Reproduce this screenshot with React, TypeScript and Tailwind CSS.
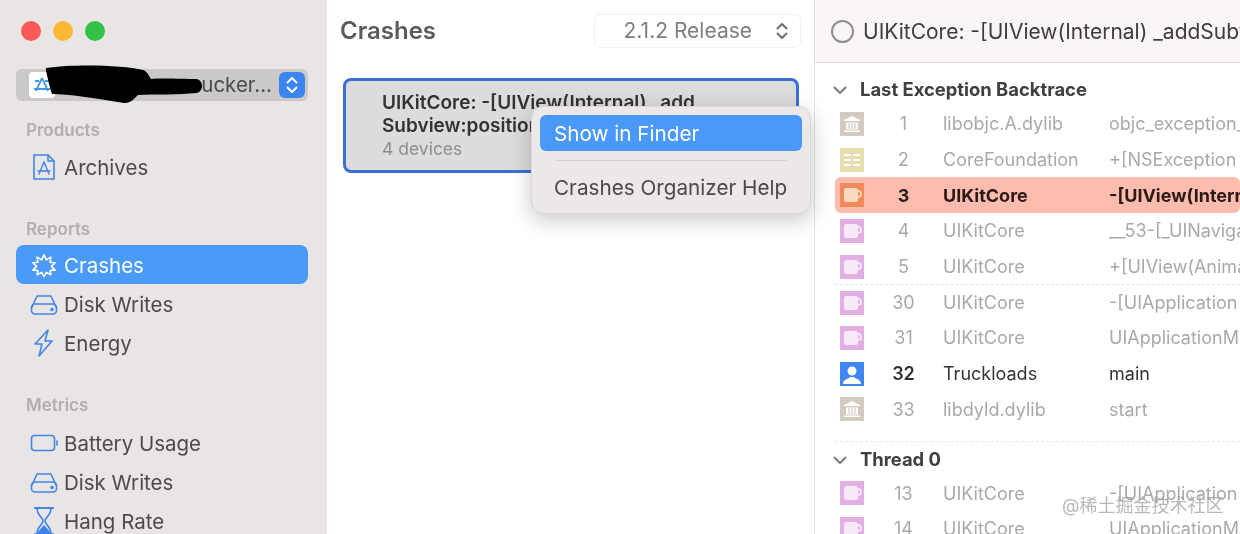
import React from "react";

const blue = "#3f86e8";

function Ic({ children }: { children: React.ReactNode }) {
  return (
    <svg width="28" height="28" viewBox="0 0 28 28" fill="none" stroke={blue} strokeWidth="1.6" strokeLinejoin="round" strokeLinecap="round" className="shrink-0">
      {children}
    </svg>
  );
}
const ArchiveIc = () => (
  <Ic>
    <path d="M4 2h14l6 6v18H4z" />
    <path d="M18 2v6h6" />
    <path d="M14 9l-5 12M14 9l5 12M8 18h12" strokeWidth="1.4" />
  </Ic>
);
const DiskIc = () => (
  <Ic>
    <path d="M2 17l5-11h14l5 11" />
    <rect x="1.5" y="14" width="25" height="10" rx="3.5" />
    <circle cx="22" cy="19.500" r="1" fill={blue} />
  </Ic>
);
const EnergyIc = () => (
  <Ic>
    <path d="M18 1L5 15h7L9 27l13-15h-7z" />
  </Ic>
);
const BatteryIc = () => (
  <Ic>
    <rect x="1.5" y="6.5" width="23" height="15" rx="3" />
    <path d="M27 12v4" />
  </Ic>
);
const HourIc = () => (
  <Ic>
    <path d="M5 1h18M5 27h18" strokeWidth="2.2" />
    <path d="M7 1c0 8 6 9 6 13s-6 5-6 13M21 1c0 8-6 9-6 13s6 5 6 13" />
    <path d="M8 26l6-7 6 7z" fill={blue} />
  </Ic>
);
const BurstIc = () => (
  <svg width="26" height="26" viewBox="0 0 28 28" fill="none" stroke="#fff" strokeWidth="1.7" strokeLinejoin="round" className="shrink-0 mx-px">
    <path d="M14 3l2.500 5.500 5-3-1 5.500 5.500.5-4 4 4 4-5.500.5 1 4.500-5-2.500-2.500 4.500-2.500-4.500-5 2.500 1-4.500-5.500-.5 4-4-4-4 5.500-.5-1-5.500 5 3z" />
  </svg>
);

function Label({ children, className = "" }: { children: React.ReactNode; className?: string }) {
  return <div className={`shrink-0 pl-[10px] text-[17px] leading-[22px] font-semibold text-[#b2aeae] ${className}`}>{children}</div>;
}
function Item({ icon, text, active }: { icon: React.ReactNode; text: string; active?: boolean }) {
  return (
    <div className={`flex items-center gap-[6px] h-[39px] shrink-0 pl-[14px] rounded-lg text-[20.500px] ${active ? "bg-[#4a9af8] text-white" : "text-[#4c4a4a]"}`}>
      {icon}
      <span className="pt-[3px]">{text}</span>
    </div>
  );
}

function Cup({ fill, bg }: { fill: string; bg: string }) {
  return (
    <svg width="24" height="24" viewBox="0 0 24 24" className="shrink-0">
      <rect width="24" height="24" fill={bg} />
      <rect x="4" y="5" width="14" height="14" rx="2.500" fill={fill} />
      <circle cx="18" cy="11" r="3" fill="none" stroke={fill} strokeWidth="1.800" />
    </svg>
  );
}
const Bank = () => (
  <svg width="24" height="24" viewBox="0 0 24 24" className="shrink-0">
    <rect width="24" height="24" fill="#d3cbc0" />
    <path d="M12 4l8 4v1H4V8z" fill="#fff" />
    <path d="M6 10.500h12v7H6z" fill="#fff" />
    <path d="M9 11v6M12 11v6M15 11v6" stroke="#d3cbc0" strokeWidth="1.200" />
    <path d="M4 18.500h16v1.500H4z" fill="#fff" />
  </svg>
);
const Grid = () => (
  <svg width="24" height="24" viewBox="0 0 24 24" className="shrink-0">
    <rect width="24" height="24" fill="#e6dcae" />
    <path d="M4 7h7M13 7h7M4 12h7M13 12h7M4 17h7M13 17h7" stroke="#fff" strokeWidth="2" />
  </svg>
);
const User = () => (
  <svg width="24" height="24" viewBox="0 0 24 24" className="shrink-0">
    <rect width="24" height="24" fill="#3f86f2" />
    <circle cx="12" cy="9" r="4.500" fill="#fff" />
    <path d="M3 22c0-5 6-5 7-7h4c1 2 7 2 7 7z" fill="#fff" />
  </svg>
);

const pink = <Cup fill="#f7eaf7" bg="#e3aee3" />;

function Row({ icon, n, lib, fn, strong, hl, dash }: { icon: React.ReactNode; n: string; lib: string; fn: string; strong?: boolean; hl?: boolean; dash?: boolean }) {
  const color = hl ? "text-[#2a1a18] font-bold" : strong ? "text-[#333]" : "text-[#aaa8a8]";
  return (
    <div
      className={`flex items-center h-[35.700px] ml-[20px] pl-[5px] text-[18px] whitespace-nowrap ${color} ${hl ? "bg-[#fdbcae] rounded-md" : ""} ${dash ? "border-t border-dashed border-[#e4e4e4]" : ""}`}
    >
      {icon}
      <span className={`w-[79px] shrink-0 text-center ${strong ? "font-semibold" : ""}`}>{n}</span>
      <span className="w-[166px] shrink-0">{lib}</span>
      <span className="shrink-0">{fn}</span>
    </div>
  );
}

function Section({ title, className = "" }: { title: string; className?: string }) {
  return (
    <div className={`flex items-center pl-[18px] gap-[13px] ${className}`}>
      <svg width="14" height="9" viewBox="0 0 14 9" fill="none" stroke="#777" strokeWidth="1.800" strokeLinecap="round" strokeLinejoin="round">
        <path d="M1.500 1.500L7 7l5.500-5.500" />
      </svg>
      <span className="text-[18.400px] font-bold text-[#3f3f3f]">{title}</span>
    </div>
  );
}

export default function App() {
  return (
    <div
      className="relative w-[1240px] h-[534px] overflow-hidden flex bg-white blur-[0.6px]"
      style={{ fontFamily: "Inter, 'Noto Sans CJK SC', sans-serif" }}
    >
      {/* Sidebar */}
      <aside className="w-[327px] shrink-0 bg-[#e9e5e5] pl-[16px] pr-[19px] flex flex-col">
        <div className="flex shrink-0 gap-[12px] pt-[21px] pl-[5px] h-[69px]">
          <span className="w-[20px] h-[20px] rounded-full bg-[#fa5a57]" />
          <span className="w-[20px] h-[20px] rounded-full bg-[#fdb833]" />
          <span className="w-[20px] h-[20px] rounded-full bg-[#35c048]" />
        </div>
        <div className="relative shrink-0 h-[32px] rounded-md bg-[#cbc8c8] flex items-center justify-between pl-[13px] pr-[3px] text-[20.500px] text-[#4c4a4a]">
          <span className="w-[26px] h-[26px] bg-white rounded-sm flex items-center justify-center">
            <svg width="20" height="20" viewBox="0 0 20 20" fill="none" stroke="#3f9be8" strokeWidth="1.800">
              <path d="M10 3l-6 13M10 3l6 13M2 14h16M3 6h4M13 6h4" />
            </svg>
          </span>
          <span className="ml-auto mr-[7px]">ucker...</span>
          <span className="w-[26px] h-[26px] rounded-md bg-[#3b86ee] flex items-center justify-center">
            <svg width="14" height="20" viewBox="0 0 14 20" fill="none" stroke="#fff" strokeWidth="2" strokeLinecap="round" strokeLinejoin="round">
              <path d="M2.500 7.500L7 3l4.500 4.500M2.500 12.500L7 17l4.500-4.500" />
            </svg>
          </span>
          <svg className="absolute left-[27px] top-[-4px]" width="160" height="38" viewBox="0 0 160 38">
            <path d="M3 3C30 -1 80 0 100 5c4 1 6 6 8 9 10 -1 32 0 45 0 8 1 8 13 0 14-15 2-40 1-58 2-6 6-8 8-14 8-30-5-55-9-72-9-3-8-4-15-6-23z" fill="#000" />
          </svg>
        </div>
        <Label className="mt-[18px]">Products</Label>
        <div className="mt-[6px] shrink-0">
          <Item icon={<ArchiveIc />} text="Archives" />
        </div>
        <Label className="mt-[32px]">Reports</Label>
        <div className="mt-[5px] shrink-0 flex flex-col">
          <Item icon={<BurstIc />} text="Crashes" active />
          <Item icon={<DiskIc />} text="Disk Writes" />
          <Item icon={<EnergyIc />} text="Energy" />
        </div>
        <Label className="mt-[32px]">Metrics</Label>
        <div className="mt-[7px] shrink-0 flex flex-col">
          <Item icon={<BatteryIc />} text="Battery Usage" />
          <Item icon={<DiskIc />} text="Disk Writes" />
          <Item icon={<HourIc />} text="Hang Rate" />
        </div>
      </aside>

      {/* Middle */}
      <main className="w-[488px] shrink-0 border-r border-[#e5e3e3] bg-white">
        <div className="h-[62px] flex items-center justify-between px-[13px]">
          <h1 className="text-[24px] font-semibold text-[#5b5b5b]">Crashes</h1>
          <div className="w-[207px] h-[34px] rounded-md border border-[#f2f0f0] flex items-center justify-end pr-[11px] gap-[23px] text-[21px] text-[#7f7d7d] mb-[1px]">
            <span>2.1.2 Release</span>
            <svg width="14" height="20" viewBox="0 0 14 20" fill="none" stroke="#6e6e6e" strokeWidth="2" strokeLinecap="round" strokeLinejoin="round">
              <path d="M2.500 7.500L7 3l4.500 4.500M2.500 12.500L7 17l4.500-4.500" />
            </svg>
          </div>
        </div>
        <div className="ml-[16px] mt-[16px] w-[456px] h-[95px] rounded-lg border-[3px] border-[#3a70d6] bg-[#dcdcdc] pl-[36px] pt-[10px] leading-[23px]">
          <div className="font-semibold text-[#333] text-[19px] whitespace-nowrap">
            UIKitCore: -[UIView(Internal) _add
            <br />
            Subview:positioned:relativeTo:]
          </div>
          <div className="text-[#8f8d8d] text-[17.500px]">4 devices</div>
        </div>
      </main>

      {/* Detail */}
      <section className="flex-1 min-w-0 overflow-hidden bg-white">
        <div className="h-[63px] bg-[#f9f6f5] border-b border-[#dedcdc] flex items-center pl-[16px] pt-px gap-[9px] text-[21px] text-[#3d3d3d] whitespace-nowrap">
          <span className="w-[23px] h-[23px] rounded-full border-2 border-[#8f8d8d] shrink-0" />
          UIKitCore: -[UIView(Internal) _addSubview:positioned:]
        </div>
        <Section title="Last Exception Backtrace" className="h-[34px] mt-[10px]" />
        <div className="mt-[-1px]">
          <Row icon={<Bank />} n="1" lib="libobjc.A.dylib" fn="objc_exception_throw" />
          <Row icon={<Grid />} n="2" lib="CoreFoundation" fn="+[NSException raise:format:]" />
          <Row icon={<Cup fill="#fbd9c0" bg="#f08a58" />} n="3" lib="UIKitCore" fn="-[UIView(Internal) _addSubview:]" hl />
          <Row icon={pink} n="4" lib="UIKitCore" fn="__53-[_UINavigationController]" />
          <Row icon={pink} n="5" lib="UIKitCore" fn="+[UIView(Animation) perform]" />
          <Row icon={pink} n="30" lib="UIKitCore" fn="-[UIApplication _run]" dash />
          <Row icon={pink} n="31" lib="UIKitCore" fn="UIApplicationMain" />
          <Row icon={<User />} n="32" lib="Truckloads" fn="main" strong />
          <Row icon={<Bank />} n="33" lib="libdyld.dylib" fn="start" />
        </div>
        <div className="ml-[20px] mt-[14px] border-t border-dashed border-[#e8e8e8]" />
        <Section title="Thread 0" className="h-[32px] mt-[2px]" />
        <div className="mt-[-1px]">
          <Row icon={pink} n="13" lib="UIKitCore" fn="-[UIApplication _run]" />
          <Row icon={pink} n="14" lib="UIKitCore" fn="UIApplicationMain" />
        </div>
      </section>

      {/* Context menu */}
      <div className="absolute left-[531px] top-[106px] w-[280px] h-[108px] rounded-xl bg-[#ebe8e7] border border-[#d8d6d6] shadow-[0_6px_22px_rgba(0,0,0,0.22)] px-[8px] pt-[8px]">
        <div className="h-[36px] rounded-md bg-[#4a98f8] text-white text-[20.700px] flex items-center pl-[14px] pt-[2px]">Show in Finder</div>
        <div className="mx-[15px] mt-[9px] h-px bg-[#d2cfcf]" />
        <div className="mt-[9px] h-[36px] text-[20.700px] text-[#4a4848] flex items-center pl-[14px]">Crashes Organizer Help</div>
      </div>

      {/* Watermark */}
      <div className="absolute left-[1062px] top-[493px] text-[18px] leading-[26px] text-[#9a9a9a]/70 whitespace-nowrap">@稀土掘金技术社区</div>
    </div>
  );
}
